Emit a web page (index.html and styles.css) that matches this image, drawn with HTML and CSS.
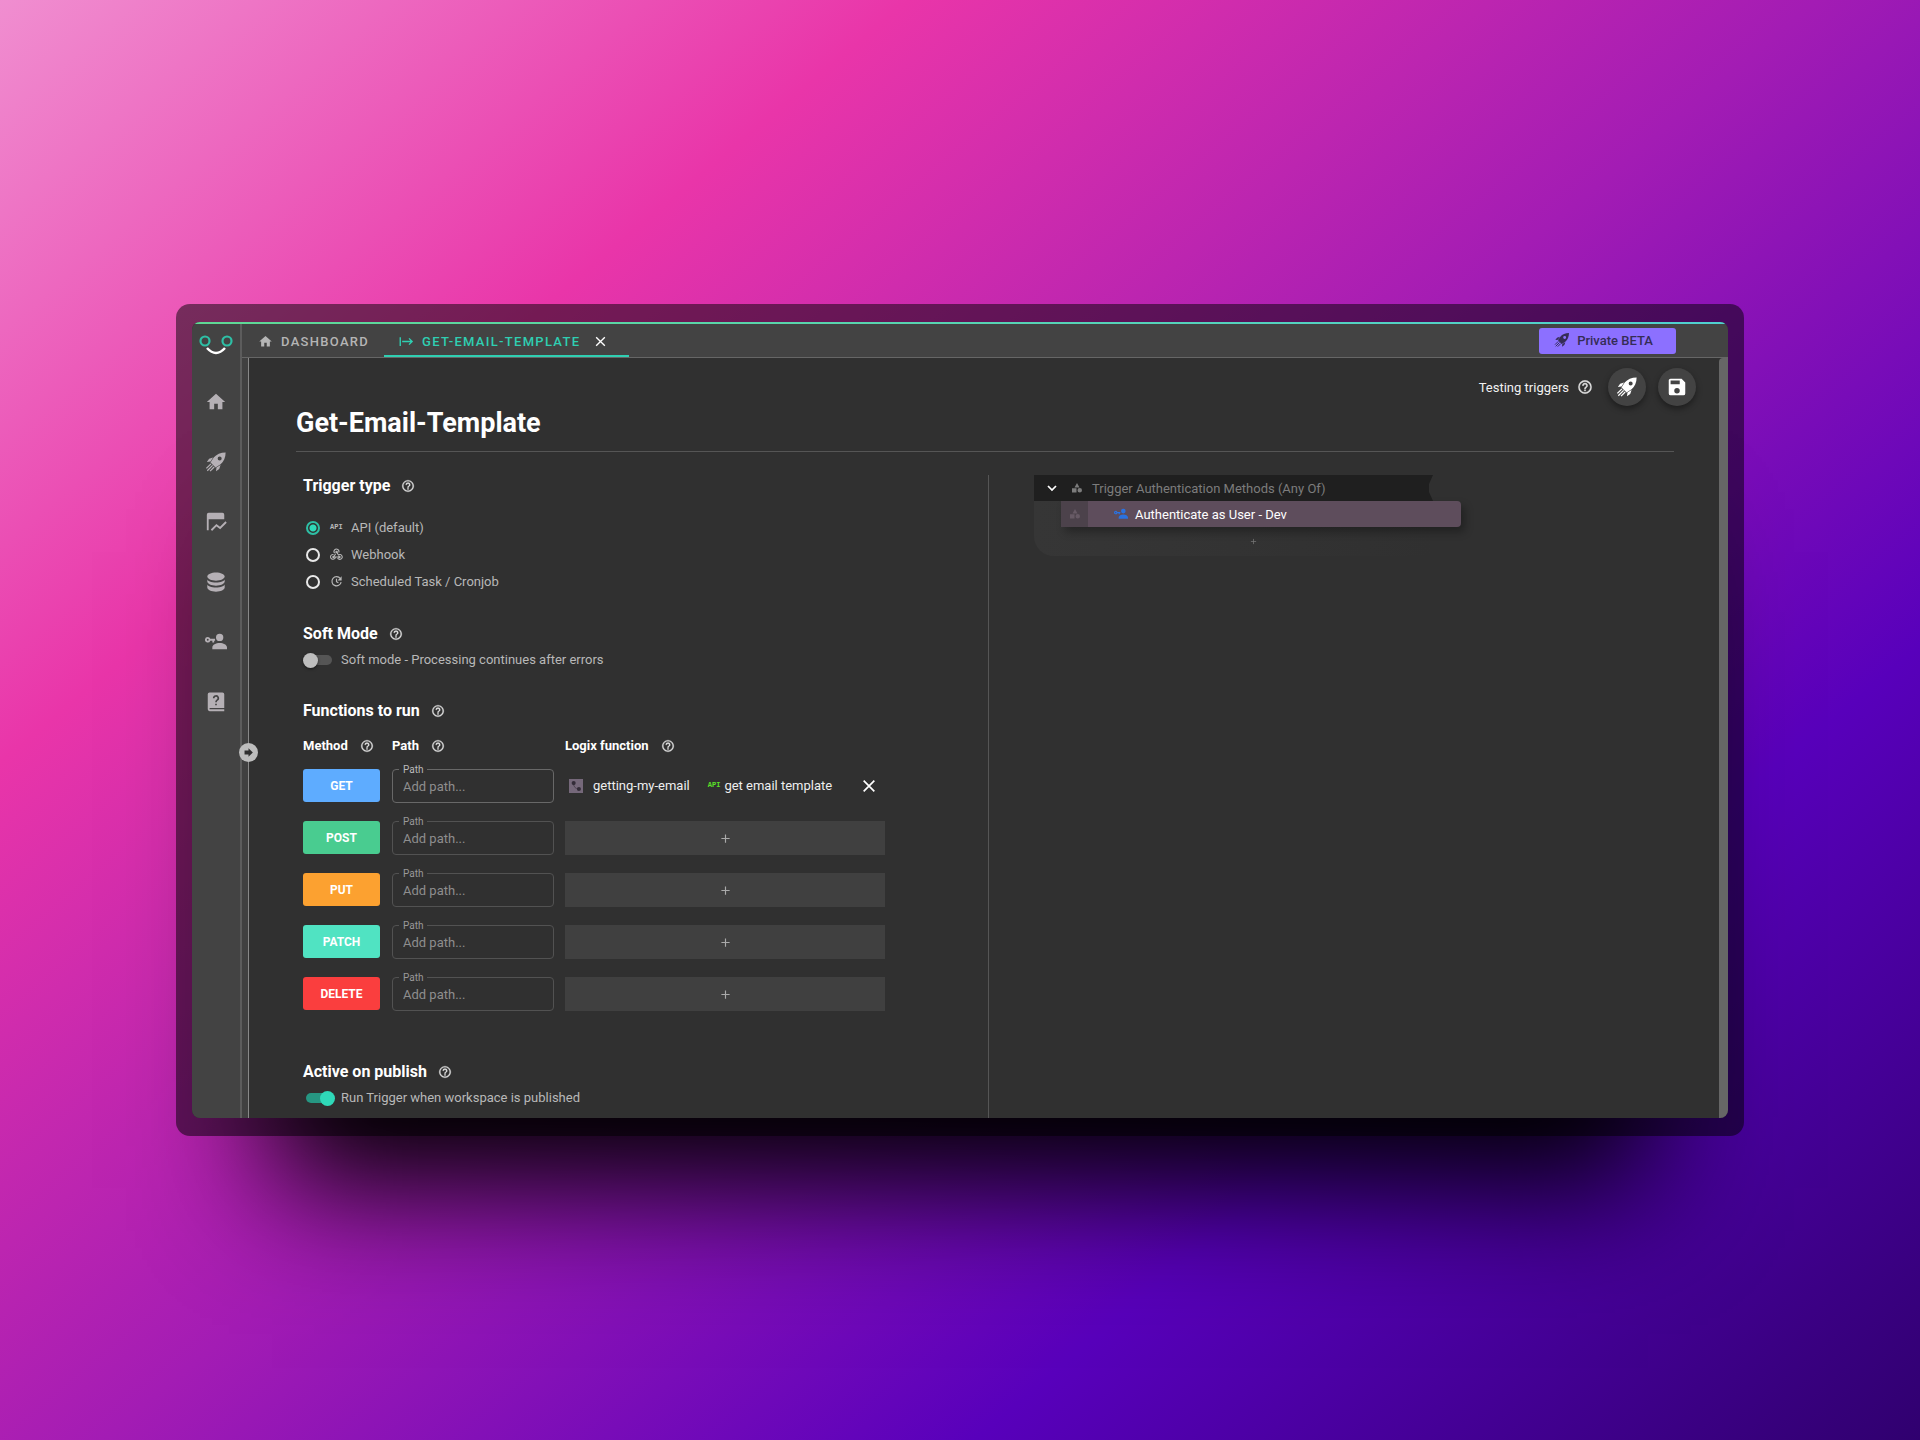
FILE: index.html
```html
<!DOCTYPE html>
<html lang="en">
<head>
    <meta charset="UTF-8">
    <meta name="viewport" content="width=device-width, initial-scale=1.0">
    <title>Get-Email-Template</title>
    <link rel="stylesheet" href="styles.css">
</head>
<body>
    <!-- icon set -->
    <svg class="sprite" aria-hidden="true">
        <symbol id="home" viewBox="0 0 24 24"><path d="M10 20V14H14V20H19V12H22L12 3L2 12H5V20H10Z"/></symbol>
        <symbol id="rocket" viewBox="0 0 24 24">
            <path fill-rule="evenodd" d="M22.500 1.500C17 1.500 12.500 3.500 9.500 7L6 12.500L11.500 18L17 14.500C20.500 11.500 22.500 7 22.500 1.500ZM16 6A2.200 2.200 0 1 1 16 10.400A2.200 2.200 0 0 1 16 6ZM8.800 7L4.500 8.500L2 12L6 11.500ZM17 15.200L15.500 19.500L12 22L12.500 18Z"/>
            <path d="M6.500 14L1.500 19M8.300 15.700L2.500 21.500M10 17.500L5.500 22" fill="none" stroke="currentColor" stroke-width="1.400"/>
        </symbol>
        <symbol id="chart" viewBox="0 0 24 24">
            <path d="M4 2H19A2 2 0 0 1 21 4V9H4V21H2V4A2 2 0 0 1 4 2Z"/>
            <path d="M7 21L12.500 15.500L16.500 18.500L23 12" fill="none" stroke="currentColor" stroke-width="2"/>
        </symbol>
        <symbol id="database" viewBox="0 0 24 24"><path d="M12 1.500C7 1.500 2.500 3.500 2.500 6S7 10.500 12 10.500S21.500 8.500 21.500 6S17 1.500 12 1.500ZM2.500 9V11.500C2.500 14 7 16 12 16S21.500 14 21.500 11.500V9C21.500 11 17 12.500 12 12.500S2.500 11 2.500 9ZM2.500 14.500V18C2.500 20.500 7 22.500 12 22.500S21.500 20.500 21.500 18V14.500C21.500 16.500 17 18 12 18S2.500 16.500 2.500 14.500Z"/></symbol>
        <symbol id="account-key" viewBox="0 0 24 24">
            <path fill-rule="evenodd" d="M16 3A4 4 0 1 1 16 11A4 4 0 0 1 16 3ZM8 20V18C8 14.800 12 13 16 13S24 14.800 24 18V20ZM3 6.500A3 3 0 0 1 5.800 8.500H11V10.500H10V12.500H8V10.500H5.800A3 3 0 1 1 3 6.500ZM3 8.500A1 1 0 1 0 3 10.500A1 1 0 0 0 3 8.500Z"/>
        </symbol>
        <symbol id="book" viewBox="0 0 24 24">
            <path d="M5 1.500H19A2 2 0 0 1 21 3.500V18.500H5V20H21V22H5A2 2 0 0 1 3 20V3.500A2 2 0 0 1 5 1.500Z"/>
            <path d="M9.500 8A2.500 2.500 0 1 1 13 10.200Q12 10.800 12 12.200M12 13.800V15.600" fill="none" stroke="#434343" stroke-width="1.800"/>
        </symbol>
        <symbol id="help" viewBox="0 0 24 24"><path d="M11 18H13V16H11V18M12 2A10 10 0 0 0 2 12A10 10 0 0 0 12 22A10 10 0 0 0 22 12A10 10 0 0 0 12 2M12 20C7.590 20 4 16.410 4 12C4 7.590 7.590 4 12 4C16.410 4 20 7.590 20 12C20 16.410 16.410 20 12 20M12 6A4 4 0 0 0 8 10H10A2 2 0 0 1 12 8A2 2 0 0 1 14 10C14 12 11 11.750 11 15H13C13 12.750 16 12.500 16 10A4 4 0 0 0 12 6Z" stroke="currentColor" stroke-width="0.500"/></symbol>
        <symbol id="save" viewBox="0 0 24 24"><path d="M15 9H5V5H15M12 19A3 3 0 0 1 9 16A3 3 0 0 1 12 13A3 3 0 0 1 15 16A3 3 0 0 1 12 19M17 3H5C3.890 3 3 3.900 3 5V19A2 2 0 0 0 5 21H19A2 2 0 0 0 21 19V7L17 3Z"/></symbol>
        <symbol id="close" viewBox="0 0 24 24"><path d="M4 4L20 20M20 4L4 20" fill="none" stroke="currentColor" stroke-width="2.500"/></symbol>
        <symbol id="from-bar" viewBox="0 0 24 24"><path d="M2 5V19M5 12H21M16 7L21 12L16 17" fill="none" stroke="currentColor" stroke-width="2.200"/></symbol>
        <symbol id="webhook" viewBox="0 0 24 24">
            <g fill="none" stroke="currentColor" stroke-width="2">
                <path d="M8.500 9.500A4.500 4.500 0 1 1 16 8.500M6.500 12A4.500 4.500 0 1 0 10 16.500H16.500M14 18.500A4.500 4.500 0 1 0 15.500 12.800L12.300 7.500M10.500 10.500L6.700 16.500"/>
                <circle cx="12.200" cy="7.300" r="1.300"/><circle cx="6.500" cy="16.500" r="1.300"/><circle cx="17.300" cy="16.500" r="1.300"/>
            </g>
        </symbol>
        <symbol id="update" viewBox="0 0 24 24">
            <path d="M19 6.500A8.500 8.500 0 1 0 20.500 13M12 7V12.500L15.500 14.500" fill="none" stroke="currentColor" stroke-width="2.200"/>
            <path d="M21.500 2.500V10H14Z"/>
        </symbol>
        <symbol id="shapes" viewBox="0 0 24 24"><path d="M12 2L17 11H7ZM2 12.500H11V21H2ZM17.500 12A4.500 4.500 0 1 1 17.500 21A4.500 4.500 0 0 1 17.500 12Z"/></symbol>
        <symbol id="chevron" viewBox="0 0 24 24"><path d="M4 8L12 16L20 8" fill="none" stroke="currentColor" stroke-width="3.500"/></symbol>
        <symbol id="plus" viewBox="0 0 24 24"><path d="M12 3V21M3 12H21" fill="none" stroke="currentColor" stroke-width="2.500"/></symbol>
        <symbol id="arrow-circle" viewBox="0 0 24 24"><circle cx="12" cy="12" r="12"/><path d="M7 9.500H12V6.500L17.500 12L12 17.500V14.500H7Z" fill="#303030"/></symbol>
        <symbol id="function" viewBox="0 0 24 24">
            <path d="M0 0H24V24H0Z" fill="#75687a"/>
            <path d="M8 8Q8 16 16 17" fill="none" stroke="#4a404e" stroke-width="1.500"/>
            <circle cx="8" cy="7" r="3.500" fill="#332c38"/><circle cx="17" cy="17" r="3.500" fill="#332c38"/>
        </symbol>
    </svg>

    <div class="frame">
        <div class="window">
            <nav class="sidebar" aria-label="Main">
                <svg class="logo" viewBox="0 0 34 22" aria-hidden="true">
                    <circle cx="6" cy="7" r="4.500"/><circle cx="28" cy="7" r="4.500"/>
                    <path d="M8 14Q17 24 26 14"/>
                </svg>
                <a href="#" aria-label="Home"><svg><use href="#home"/></svg></a>
                <a href="#" aria-label="Publish"><svg><use href="#rocket"/></svg></a>
                <a href="#" aria-label="Pages"><svg><use href="#chart"/></svg></a>
                <a href="#" aria-label="Data"><svg><use href="#database"/></svg></a>
                <a href="#" aria-label="Access"><svg><use href="#account-key"/></svg></a>
                <a href="#" aria-label="Docs"><svg><use href="#book"/></svg></a>
            </nav>
            <div class="workspace">
                <header class="tabs">
                    <a class="tab" href="#"><svg><use href="#home"/></svg>DASHBOARD</a>
                    <div class="tab active">
                        <a href="#"><svg><use href="#from-bar"/></svg>GET-EMAIL-TEMPLATE</a>
                        <button class="plain" aria-label="Close tab"><svg><use href="#close"/></svg></button>
                    </div>
                    <button class="beta"><svg><use href="#rocket"/></svg>Private BETA</button>
                </header>
                <div class="editor">
                    <div class="rail">
                        <button class="handle plain" aria-label="Expand panel"><svg><use href="#arrow-circle"/></svg></button>
                    </div>
                    <main class="page">
                        <div class="toolbar">
                            <span>Testing triggers</span>
                            <svg class="help"><use href="#help"/></svg>
                            <button class="round" aria-label="Run"><svg><use href="#rocket"/></svg></button>
                            <button class="round" aria-label="Save"><svg><use href="#save"/></svg></button>
                        </div>
                        <h1>Get-Email-Template</h1>
                        <div class="columns">
                            <form class="settings">
                                <h2>Trigger type <svg class="help"><use href="#help"/></svg></h2>
                                <div class="radios">
                                    <label><input type="radio" name="type" checked><span class="api" aria-hidden="true">API</span>API (default)</label>
                                    <label><input type="radio" name="type"><svg><use href="#webhook"/></svg>Webhook</label>
                                    <label><input type="radio" name="type"><svg><use href="#update"/></svg>Scheduled Task / Cronjob</label>
                                </div>

                                <h2>Soft Mode <svg class="help"><use href="#help"/></svg></h2>
                                <label class="switch"><input type="checkbox">Soft mode - Processing continues after errors</label>

                                <h2 class="functions">Functions to run <svg class="help"><use href="#help"/></svg></h2>
                                <table>
                                    <thead>
                                        <tr>
                                            <th class="method-col">Method <svg class="help"><use href="#help"/></svg></th>
                                            <th class="path-col">Path <svg class="help"><use href="#help"/></svg></th>
                                            <th>Logix function <svg class="help"><use href="#help"/></svg></th>
                                        </tr>
                                    </thead>
                                    <tbody>
                                        <tr>
                                            <td><button type="button" class="method get">GET</button></td>
                                            <td><div class="field bright"><label for="path-get">Path</label><input id="path-get" type="text" placeholder="Add path..."></div></td>
                                            <td>
                                                <div class="logix">
                                                    <svg class="fn"><use href="#function"/></svg>
                                                    <span>getting-my-email</span>
                                                    <span class="api green" aria-hidden="true">API</span>
                                                    <span>get email template</span>
                                                    <button type="button" class="plain" aria-label="Remove function"><svg><use href="#close"/></svg></button>
                                                </div>
                                            </td>
                                        </tr>
                                        <tr>
                                            <td><button type="button" class="method post">POST</button></td>
                                            <td><div class="field"><label for="path-post">Path</label><input id="path-post" type="text" placeholder="Add path..."></div></td>
                                            <td><button type="button" class="add" aria-label="Add function"><svg><use href="#plus"/></svg></button></td>
                                        </tr>
                                        <tr>
                                            <td><button type="button" class="method put">PUT</button></td>
                                            <td><div class="field"><label for="path-put">Path</label><input id="path-put" type="text" placeholder="Add path..."></div></td>
                                            <td><button type="button" class="add" aria-label="Add function"><svg><use href="#plus"/></svg></button></td>
                                        </tr>
                                        <tr>
                                            <td><button type="button" class="method patch">PATCH</button></td>
                                            <td><div class="field"><label for="path-patch">Path</label><input id="path-patch" type="text" placeholder="Add path..."></div></td>
                                            <td><button type="button" class="add" aria-label="Add function"><svg><use href="#plus"/></svg></button></td>
                                        </tr>
                                        <tr>
                                            <td><button type="button" class="method delete">DELETE</button></td>
                                            <td><div class="field"><label for="path-delete">Path</label><input id="path-delete" type="text" placeholder="Add path..."></div></td>
                                            <td><button type="button" class="add" aria-label="Add function"><svg><use href="#plus"/></svg></button></td>
                                        </tr>
                                    </tbody>
                                </table>

                                <h2 class="publish">Active on publish <svg class="help"><use href="#help"/></svg></h2>
                                <label class="switch"><input type="checkbox" checked>Run Trigger when workspace is published</label>
                            </form>

                            <section class="auth">
                                <div class="auth-block">
                                    <button class="auth-head">
                                        <svg class="chevron"><use href="#chevron"/></svg>
                                        <svg class="shapes"><use href="#shapes"/></svg>
                                        Trigger Authentication Methods (Any Of)
                                    </button>
                                    <div class="auth-body">
                                        <div class="auth-item">
                                            <span class="grip"><svg><use href="#shapes"/></svg></span>
                                            <svg class="user"><use href="#account-key"/></svg>
                                            Authenticate as User - Dev
                                        </div>
                                        <button class="auth-add plain" aria-label="Add method"><svg><use href="#plus"/></svg></button>
                                    </div>
                                </div>
                            </section>
                        </div>
                    </main>
                    <div class="scrollbar"></div>
                </div>
            </div>
        </div>
    </div>
</body>
</html>
```

FILE: styles.css
```css
* {
    box-sizing: border-box;
}

body {
    margin: 0;
    min-height: 100vh;
    display: flex;
    align-items: center;
    padding: 0 176px;
    font-family: Roboto, "Liberation Sans", sans-serif;
    font-size: 14px;
    color: #fff;
    background: linear-gradient(140deg, #f08ed0 0%, #e935a9 25%, #a31cb4 50%, #5800bb 74%, #30006f 100%);
}

button {
    font-family: inherit;
    border: none;
    padding: 0;
    cursor: pointer;
}

a {
    color: inherit;
    text-decoration: none;
}

svg {
    fill: currentColor;
    flex-shrink: 0;
}

.sprite {
    position: absolute;
    width: 0;
    height: 0;
}

.plain {
    display: flex;
    background: none;
    color: inherit;
}

.frame {
    flex: 1;
    min-width: 0;
    padding: 18px 16px;
    border-radius: 14px;
    background: rgba(0, 0, 0, 0.5);
}

.window {
    position: relative;
    display: flex;
    overflow: hidden;
    border-radius: 8px;
    background: #303030;
    box-shadow: 0 150px 120px -80px #000;
}

/* accent line over the top edge */
.window::before {
    content: "";
    position: absolute;
    top: 0;
    left: 0;
    right: 0;
    height: 2px;
    background: linear-gradient(90deg, #5fd894, #50d0d0);
}

/* sidebar */
.sidebar {
    width: 50px;
    padding-top: 12px;
    display: flex;
    flex-direction: column;
    align-items: center;
    background: #434343;
    border-right: 2px solid #5c5c5c;
    color: #b5b0b5;
}

.logo {
    width: 34px;
    height: 22px;
    margin-bottom: 16px;
    fill: none;
    stroke: #2ebfa5;
    stroke-width: 2.2;
}

.logo path {
    stroke: #fff;
    stroke-width: 2.5;
}

.sidebar a {
    height: 60px;
    display: flex;
    align-items: center;
}

.sidebar a svg {
    width: 22px;
    height: 22px;
}

/* tabs */
.workspace {
    flex: 1;
    min-width: 0;
    display: flex;
    flex-direction: column;
}

.tabs {
    height: 36px;
    padding-top: 3px;
    display: flex;
    background: #434343;
    border-bottom: 1px solid #666;
    font-size: 13px;
    font-weight: 500;
    letter-spacing: 0.1em;
    color: #b5b5b5;
}

.tab,
.tab a {
    display: flex;
    align-items: center;
    gap: 8px;
}

.tab {
    padding: 0 15px 0 16px;
}

.tab svg {
    width: 15px;
    height: 15px;
}

.tab.active {
    gap: 14px;
    padding: 2px 22px 0 15px;
    color: #2fcfb2;
    border-bottom: 2px solid #2fcfb2;
}

.tab .plain {
    color: #fff;
}

.tab .plain svg {
    width: 13px;
    height: 13px;
}

.beta {
    align-self: center;
    width: 137px;
    height: 26px;
    margin: 0 52px 0 auto;
    padding: 0 8px 2px 0;
    display: flex;
    align-items: center;
    justify-content: center;
    gap: 7px;
    border-radius: 3px;
    background: #8c70ff;
    color: #352c55;
    font-size: 13px;
    font-weight: 500;
}

.beta svg {
    width: 16px;
    height: 16px;
}

/* editor */
.editor {
    flex: 1;
    display: flex;
}

.rail {
    width: 7px;
    padding-top: 28px;
    display: flex;
    justify-content: center;
    align-items: center;
    background: #404040;
    border-right: 1px solid #888;
}

/* the handle straddles the line between rail and page */
.handle {
    position: relative;
    flex-shrink: 0;
    left: 3px;
    color: #bdbdbd;
}

.handle svg {
    width: 19px;
    height: 19px;
}

.page {
    flex: 1;
    min-width: 0;
    padding-left: 47px;
}

.scrollbar {
    width: 9px;
    background: #666;
    border-radius: 4px 0 0 0;
}

.toolbar {
    padding: 10px 23px 0 0;
    display: flex;
    justify-content: flex-end;
    align-items: center;
    gap: 12px;
    font-size: 13px;
    color: #f0f0f0;
}

.toolbar .help {
    width: 16px;
    height: 16px;
    margin: 0 3px 0 -4px;
}

.round {
    width: 38px;
    height: 38px;
    display: flex;
    align-items: center;
    justify-content: center;
    border-radius: 50%;
    background: #434343;
    color: #fff;
    box-shadow: 0 3px 6px rgba(0, 0, 0, 0.4);
}

.round svg {
    width: 22px;
    height: 22px;
}

h1 {
    margin: 0 45px 23px 0;
    padding-bottom: 10px;
    border-bottom: 1px solid #555;
    font-size: 27px;
    line-height: 35px;
    font-weight: 700;
}

.columns {
    display: grid;
    grid-template-columns: 50% 1fr;
    margin-right: 39px;
}

.settings {
    padding: 1px 7px 10px;
}

h2 {
    margin: 0;
    display: flex;
    align-items: center;
    gap: 11px;
    font-size: 16px;
    line-height: 20px;
    font-weight: 700;
}

.help {
    width: 14px;
    height: 14px;
    color: #e0e0e0;
}

.radios {
    margin: 18px 0 29px;
    color: #b8b8b8;
    font-size: 13px;
}

.radios label {
    height: 27px;
    display: flex;
    align-items: center;
}

.radios input {
    appearance: none;
    width: 14px;
    height: 14px;
    margin: 0 10px 0 3px;
    border: 2px solid #e8e8e8;
    border-radius: 50%;
}

.radios input:checked {
    border-color: #2ebfa5;
    background: radial-gradient(circle, #2fd8b8 3px, transparent 4px);
}

.radios svg,
.radios .api {
    width: 13px;
    height: 13px;
    margin-right: 8px;
}

.api {
    font-family: "Liberation Mono", monospace;
    font-size: 7px;
    line-height: 13px;
    font-weight: 700;
}

.green {
    color: #5ae028;
}

.switch {
    margin-top: 6px;
    display: flex;
    align-items: center;
    gap: 9px;
    font-size: 13px;
    line-height: 20px;
    color: #b8b8b8;
}

/* track, with the thumb hanging over its end */
.switch input {
    appearance: none;
    width: 26px;
    height: 10px;
    margin: 0 0 0 3px;
    display: flex;
    align-items: center;
    border-radius: 5px;
    background: #555;
}

.switch input::before {
    content: "";
    flex-shrink: 0;
    width: 15px;
    height: 15px;
    margin: 0 -3px;
    border-radius: 50%;
    background: #bdbdbd;
    box-shadow: 0 1px 3px rgba(0, 0, 0, 0.5);
}

.switch input:checked {
    justify-content: flex-end;
    background: #269682;
}

.switch input:checked::before {
    background: #2fd8b8;
    box-shadow: none;
}

.functions {
    margin: 31px 0 15px;
}

/* functions table */
table {
    width: 582px;
    table-layout: fixed;
    border-collapse: collapse;
}

th,
td {
    padding: 0;
    text-align: left;
    vertical-align: top;
}

th {
    height: 33px;
    font-size: 13px;
    line-height: 20px;
    font-weight: 700;
}

th svg {
    margin-left: 9px;
    vertical-align: -3px;
}

tbody tr {
    height: 52px;
}

.method-col {
    width: 89px;
}

.path-col {
    width: 173px;
}

.method {
    width: 77px;
    height: 33px;
    border-radius: 3px;
    color: #fff;
    font-size: 12px;
    font-weight: 700;
}

.get { background: #5eacff; }
.post { background: #49cc90; }
.put { background: #fca130; }
.patch { background: #50e3c2; }
.delete { background: #fa3e3e; }

.field {
    position: relative;
    width: 162px;
}

.field input {
    display: block;
    width: 100%;
    height: 34px;
    padding: 0 10px;
    border: 1px solid #525252;
    border-radius: 4px;
    background: none;
    color: #fff;
    font-family: inherit;
    font-size: 13px;
}

.field input::placeholder {
    color: #8e8e8e;
}

/* label sits on the border */
.field label {
    position: absolute;
    top: -5px;
    left: 7px;
    padding: 0 4px;
    background: #303030;
    color: #999;
    font-size: 10px;
    line-height: 12px;
}

.bright input {
    border-color: #686868;
}

.bright label {
    color: #bbb;
}

.add {
    width: 320px;
    height: 34px;
    display: flex;
    align-items: center;
    justify-content: center;
    background: #404040;
    color: #aaa;
}

.add svg {
    width: 11px;
    height: 11px;
}

.logix {
    height: 33px;
    padding: 0 8px 0 4px;
    display: flex;
    align-items: center;
    font-size: 13px;
    color: #eee;
}

.logix .fn {
    width: 14px;
    height: 14px;
    margin-right: 10px;
}

.logix .green {
    margin: 0 4px 0 18px;
}

.logix .plain {
    margin-left: auto;
    color: #fff;
}

.logix .plain svg {
    width: 16px;
    height: 16px;
}

.publish {
    margin-top: 33px;
}

/* authentication */
.auth {
    padding-left: 45px;
    border-left: 1px solid #555;
}

.auth-block {
    width: 399px;
}

.auth-head {
    width: 100%;
    height: 26px;
    padding-left: 12px;
    display: flex;
    align-items: center;
    background: #1f1f1f;
    color: #7c7c7c;
    font-size: 13px;
    clip-path: polygon(0 0, 100% 0, 99% 35%, 99% 65%, 100% 100%, 0 100%);
}

.auth-head .chevron {
    width: 12px;
    height: 12px;
    margin-right: 13px;
    color: #fff;
}

.auth-head .shapes {
    width: 12px;
    height: 12px;
    margin-right: 9px;
}

.auth-body {
    height: 55px;
    padding-left: 27px;
    border-radius: 0 0 0 20px;
    background: linear-gradient(90deg, #363636, #303030);
}

.auth-item {
    width: 400px;
    height: 26px;
    display: flex;
    align-items: center;
    border-radius: 0 4px 4px 0;
    background: #5e4d5c;
    font-size: 13px;
    box-shadow: 4px 5px 8px rgba(0, 0, 0, 0.3);
}

.grip {
    width: 27px;
    height: 26px;
    display: flex;
    align-items: center;
    justify-content: center;
    background: #4c424b;
    color: #675a65;
}

.grip svg {
    width: 12px;
    height: 12px;
}

.user {
    width: 14px;
    height: 14px;
    margin: 0 7px 0 26px;
    color: #2a72e0;
}

.auth-add {
    margin: 11px auto 0;
    padding-left: 12px;
    color: #777;
}

.auth-add svg {
    width: 7px;
    height: 7px;
}
```
